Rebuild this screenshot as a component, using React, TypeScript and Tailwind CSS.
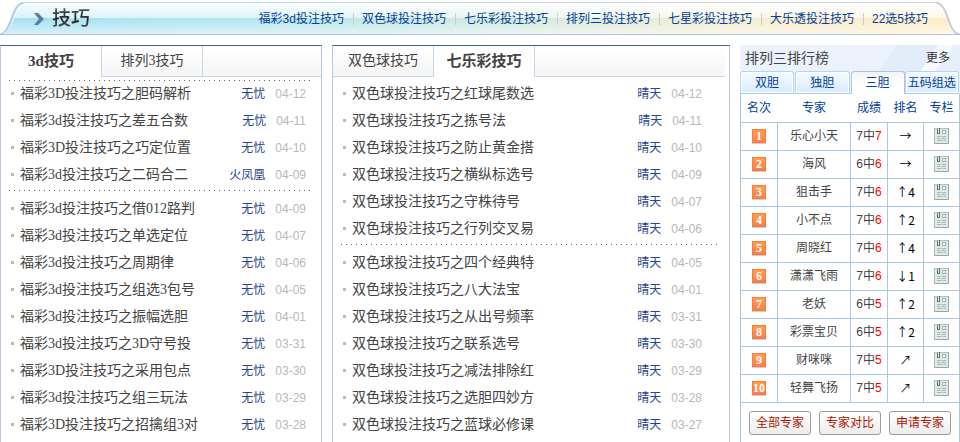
import React, { useState } from 'react'

interface Tip {
  title: string
  author: string
  date: string
}

interface Expert {
  name: string
  total: number
  hit: number
  trend: string
}

const navLinks = ['福彩3d投注技巧', '双色球投注技巧', '七乐彩投注技巧', '排列三投注技巧', '七星彩投注技巧', '大乐透投注技巧', '22选5技巧']

const tips3d: Tip[] = [
  { title: '福彩3D投注技巧之胆码解析', author: '无忧', date: '04-12' },
  { title: '福彩3d投注技巧之差五合数', author: '无忧', date: '04-11' },
  { title: '福彩3D投注技巧之巧定位置', author: '无忧', date: '04-10' },
  { title: '福彩3d投注技巧之二码合二', author: '火凤凰', date: '04-09' },
  { title: '福彩3d投注技巧之借012路判', author: '无忧', date: '04-09' },
  { title: '福彩3d投注技巧之单选定位', author: '无忧', date: '04-07' },
  { title: '福彩3d投注技巧之周期律', author: '无忧', date: '04-06' },
  { title: '福彩3d投注技巧之组选3包号', author: '无忧', date: '04-05' },
  { title: '福彩3d投注技巧之振幅选胆', author: '无忧', date: '04-01' },
  { title: '福彩3d投注技巧之3D守号投', author: '无忧', date: '03-31' },
  { title: '福彩3D投注技巧之采用包点', author: '无忧', date: '03-30' },
  { title: '福彩3d投注技巧之组三玩法', author: '无忧', date: '03-29' },
  { title: '福彩3D投注技巧之招擒组3对', author: '无忧', date: '03-28' },
]

const tipsSsq: Tip[] = [
  { title: '双色球投注技巧之红球尾数选', author: '晴天', date: '04-12' },
  { title: '双色球投注技巧之拣号法', author: '晴天', date: '04-11' },
  { title: '双色球投注技巧之防止黄金搭', author: '晴天', date: '04-10' },
  { title: '双色球投注技巧之横纵标选号', author: '晴天', date: '04-09' },
  { title: '双色球投注技巧之守株待号', author: '晴天', date: '04-07' },
  { title: '双色球投注技巧之行列交叉易', author: '晴天', date: '04-06' },
  { title: '双色球投注技巧之四个经典特', author: '晴天', date: '04-05' },
  { title: '双色球投注技巧之八大法宝', author: '晴天', date: '04-01' },
  { title: '双色球投注技巧之从出号频率', author: '晴天', date: '03-31' },
  { title: '双色球投注技巧之联系选号', author: '晴天', date: '03-30' },
  { title: '双色球投注技巧之减法排除红', author: '晴天', date: '03-29' },
  { title: '双色球投注技巧之选胆四妙方', author: '晴天', date: '03-28' },
  { title: '双色球投注技巧之蓝球必修课', author: '晴天', date: '03-27' },
]

const experts: Expert[] = [
  { name: '乐心小天', total: 7, hit: 7, trend: '→' },
  { name: '海风', total: 6, hit: 6, trend: '→' },
  { name: '狙击手', total: 7, hit: 6, trend: '↑4' },
  { name: '小不点', total: 7, hit: 6, trend: '↑2' },
  { name: '周晓红', total: 7, hit: 6, trend: '↑4' },
  { name: '潇潇飞雨', total: 7, hit: 6, trend: '↓1' },
  { name: '老妖', total: 6, hit: 5, trend: '↑2' },
  { name: '彩票宝贝', total: 6, hit: 5, trend: '↑2' },
  { name: '财咪咪', total: 7, hit: 5, trend: '↗' },
  { name: '轻舞飞扬', total: 7, hit: 5, trend: '↗' },
]

const rankTabs = ['双胆', '独胆', '三胆', '五码组选']

const Header: React.FC = () => (
  <header className="flex h-[35px] pt-[2px]">
    <svg width="24" height="33" viewBox="0 0 24 33" className="shrink-0" aria-hidden="true">
      <defs>
        <linearGradient id="capLeft" x1="0" y1="0" x2="0" y2="1">
          <stop offset="0" stopColor="#f8fdfe" />
          <stop offset="0.5" stopColor="#d8f2f9" />
          <stop offset="0.5" stopColor="#a6e1f3" />
          <stop offset="1" stopColor="#d5f1f9" />
        </linearGradient>
      </defs>
      <path d="M0 32.5C12 31 10 3 24 .5V32.5Z" fill="url(#capLeft)" />
      <path d="M0 32.5C12 31 10 3 24 .5" fill="none" stroke="#b4cbe9" strokeWidth="2" />
      <path d="M3 32C14 29 13 5 24 2" fill="none" stroke="#eef8fd" strokeWidth="1" />
      <path d="M0 32.5H24" stroke="#abc1e2" />
    </svg>
    <div className="flex min-w-0 flex-1 items-center justify-between border-t border-b border-t-[#c3d5e6] border-b-[#abc1e2] bg-[linear-gradient(to_bottom,#fffffff0,#ffffff90_50%,#ffffff00_50%,#ffffff88),linear-gradient(to_right,#a4e1f3,#b3e5ee_25%,#d3e9df_55%,#f4ecd0_78%,#ffebc6)] pl-[10px]">
      <h1 className="flex items-center gap-2 text-[19px] leading-[30px] font-medium">
        <svg width="10" height="12" viewBox="0 0 10 12" aria-hidden="true">
          <path d="M0 0H4L10 6L4 12H0L5 6Z" fill="#5c7ba6" />
        </svg>
        <span className="bg-linear-to-b from-[#6a6a6a] via-[#222222] to-[#777777] bg-clip-text text-transparent">技巧</span>
      </h1>
      <nav className="flex items-center pr-2 text-xs">
        {navLinks.map((link, i) => (
          <React.Fragment key={link}>
            {i > 0 && <span className="mr-2 ml-[9px] h-3 w-px bg-[#c4cfd4]" />}
            <a href="#" className="whitespace-nowrap text-[#00419a] hover:underline">{link}</a>
          </React.Fragment>
        ))}
      </nav>
    </div>
    <svg width="24" height="33" viewBox="0 0 24 33" className="shrink-0" aria-hidden="true">
      <defs>
        <linearGradient id="capRight" x1="0" y1="0" x2="0" y2="1">
          <stop offset="0" stopColor="#fffefc" />
          <stop offset="0.5" stopColor="#fff6e5" />
          <stop offset="0.5" stopColor="#ffebc6" />
          <stop offset="1" stopColor="#fff6e5" />
        </linearGradient>
      </defs>
      <path d="M0 .5C14 3 10 30 24 32.5H0Z" fill="url(#capRight)" />
      <path d="M0 .5C14 3 10 30 24 32.5" fill="none" stroke="#c2cfdc" strokeWidth="2" />
      <path d="M0 32.5H24" stroke="#abc1e2" />
    </svg>
  </header>
)

const DottedLine: React.FC = () => (
  <div className="mx-2 h-px bg-[repeating-linear-gradient(to_right,#666666_0_1px,transparent_1px_5px)]" />
)

const TipRow: React.FC<{ tip: Tip }> = ({ tip }) => (
  <li className="flex h-[27px] items-center pl-[10px]">
    <span className="mr-[6px] size-[3px] bg-[#bbbbbb]" />
    <a href="#" className="flex-1 truncate font-['Liberation_Serif','Noto_Sans_CJK_SC',serif] text-sm text-[#444444] hover:underline">{tip.title}</a>
    <a href="#" className="text-xs text-[#27458f] hover:underline">{tip.author}</a>
    <span className="ml-[10px] text-xs text-[#b8b8b8]">{tip.date}</span>
  </li>
)

interface TipPanelProps {
  tabs: string[]
  defaultTab: number
  tips: Tip[]
  splitAt: number
  topLine?: boolean
  className?: string
  listClassName?: string
}

const TipPanel: React.FC<TipPanelProps> = ({ tabs, defaultTab, tips, splitAt, topLine, className, listClassName }) => {
  const [active, setActive] = useState(defaultTab)

  return (
    <section className={`border-x border-t border-x-[#b9c7dd] border-t-[#3f5f9b] ${className}`}>
      <div className="flex h-[31px] font-['Liberation_Serif','Noto_Sans_CJK_SC',serif]">
        {tabs.map((tab, i) => (
          <button
            key={tab}
            onClick={() => setActive(i)}
            className={i === active
              ? 'w-[101px] border-r border-[#c5d6e8] bg-white text-[15px] font-bold text-[#444444]'
              : 'w-[101px] border-r border-b border-[#c5d6e8] bg-linear-to-b from-white to-[#f5f5f5] text-sm text-[#444444]'}
          >
            {tab}
          </button>
        ))}
        <div className="flex-1 border-b border-[#c5d6e8] bg-linear-to-b from-white to-[#f5f5f5]" />
      </div>
      <div className="h-[3px]" />
      {topLine && <div className="-mb-px"><DottedLine /></div>}
      <ul className={listClassName}>
        {tips.slice(0, splitAt).map((tip) => <TipRow key={tip.title} tip={tip} />)}
      </ul>
      <div className="h-[7px] pt-[2px]"><DottedLine /></div>
      <ul className={`pb-1 ${listClassName}`}>
        {tips.slice(splitAt).map((tip) => <TipRow key={tip.title} tip={tip} />)}
      </ul>
    </section>
  )
}

const ColumnIcon: React.FC = () => (
  <svg width="15" height="16" viewBox="0 0 15 16" shapeRendering="crispEdges" aria-hidden="true">
    <rect x="0.5" y="0.5" width="14" height="15" fill="#dfeae8" stroke="#aebfbc" />
    <path d="M1 15.5H14M14.5 1V15" stroke="#93a8a5" />
    <path d="M3.5 1V5.5H5.5V0" fill="none" stroke="#5f706e" />
    <rect x="8.5" y="2.5" width="3" height="3" fill="#f3f8f7" stroke="#9db1ae" />
    <path d="M3 8.5H7M8 8.5H12M3 10.5H6M7 10.5H12M3 12.5H8M9 12.5H12" stroke="#a5b8b5" />
  </svg>
)

const RankPanel: React.FC = () => {
  const [active, setActive] = useState(2)

  return (
    <section className="w-[220px] shrink-0">
      <div className="bg-[linear-gradient(125deg,#ecf2fb_62%,#e3edfa_62%_78%,#f6faff_78%_84%,#e6effb_84%)]">
        <div className="flex h-[26px] items-center justify-between pr-[10px] pl-[5px]">
          <h2 className="text-sm leading-5 text-[#444444]">排列三排行榜</h2>
          <a href="#" className="text-xs text-[#333333]">更多</a>
        </div>
        <div className="flex">
          {rankTabs.map((tab, i) => (
            <button
              key={tab}
              onClick={() => setActive(i)}
              className={i === active
                ? 'h-[23px] flex-1 rounded-t-[3px] border border-b-0 border-[#a9c8e9] bg-linear-to-b from-[#f3f3f3] to-white to-50% text-xs whitespace-nowrap text-[#00419a]'
                : 'mr-px h-[23px] flex-1 rounded-t-[3px] border border-[#b5d5ee] border-b-[#a9c8e9] bg-linear-to-b from-[#f6fbff] to-[#d9ebfc] text-xs whitespace-nowrap text-[#00419a] inset-ring inset-ring-white'}
            >
              {tab}
            </button>
          ))}
        </div>
      </div>
      <div className="min-h-[348px] border-x border-[#a9c8ee]">
        <table className="-mx-px w-[calc(100%+2px)] table-fixed border-collapse text-center text-xs leading-4 text-[#444444]">
          <colgroup>
            <col className="w-[37px]" />
            <col />
            <col className="w-[37px]" />
            <col className="w-[36px]" />
            <col className="w-[36px]" />
          </colgroup>
          <thead>
            <tr className="h-7 text-[#00419a]">
              <th className="p-0 font-normal">名次</th>
              <th className="p-0 font-normal">专家</th>
              <th className="p-0 font-normal">成绩</th>
              <th className="p-0 font-normal">排名</th>
              <th className="p-0 font-normal">专栏</th>
            </tr>
          </thead>
          <tbody>
            {experts.map((e, i) => (
              <tr key={e.name} className="h-7">
                <td className="border border-[#a9c8ee] p-0">
                  <span className="mx-auto block h-[14px] w-[14px] border border-[#fb7a3c] bg-linear-to-b from-[#ffa04c] to-[#ff7c4c] font-['Liberation_Serif',serif] text-xs leading-3 font-bold text-white shadow-[0_1px_0_#c9cfd6]">
                    {i + 1}
                  </span>
                </td>
                <td className="border border-[#a9c8ee] p-0">{e.name}</td>
                <td className="border border-[#a9c8ee] p-0">{e.total}中<span className="text-[#ff0000]">{e.hit}</span></td>
                <td className="border border-[#a9c8ee] p-0 font-['Noto_Sans_CJK_SC',sans-serif] text-black">{e.trend}</td>
                <td className="border border-[#a9c8ee] p-0">
                  <a href="#" aria-label={e.name} className="flex justify-center"><ColumnIcon /></a>
                </td>
              </tr>
            ))}
          </tbody>
        </table>
        <div className="flex justify-center gap-2 pt-2">
          {['全部专家', '专家对比', '申请专家'].map((label) => (
            <button key={label} className="h-6 w-[62px] rounded-[3px] border border-[#9c9c9c] bg-linear-to-b from-white to-[#ececec] text-xs whitespace-nowrap text-[#b01500]">
              {label}
            </button>
          ))}
        </div>
      </div>
    </section>
  )
}

const App: React.FC = () => (
  <div className="bg-white font-['Liberation_Sans','Noto_Sans_CJK_SC',sans-serif]">
    <Header />
    <main className="flex gap-[10px] pt-[10px]">
      <TipPanel
        tabs={['3d技巧', '排列3技巧']}
        defaultTab={0}
        tips={tips3d}
        splitAt={4}
        topLine
        className="flex-[320]"
        listClassName="pr-[15px]"
      />
      <TipPanel
        tabs={['双色球技巧', '七乐彩技巧']}
        defaultTab={1}
        tips={tipsSsq}
        splitAt={6}
        className="flex-[392] pr-1"
        listClassName="pr-[23px]"
      />
      <RankPanel />
    </main>
  </div>
)

export default App
